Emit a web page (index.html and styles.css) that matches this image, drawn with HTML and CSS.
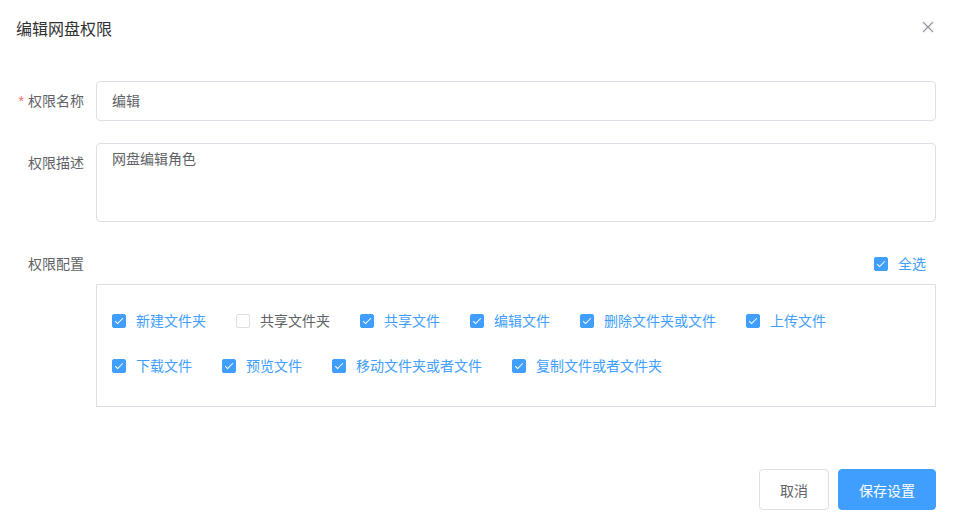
FILE: index.html
```html
<!DOCTYPE html>
<html lang="zh-CN">
<head>
    <meta charset="UTF-8">
    <meta name="viewport" content="width=device-width, initial-scale=1.0">
    <title>编辑网盘权限</title>
    <link rel="stylesheet" href="styles.css">
</head>
<body>
    <div class="dialog">
        <div class="dialog-header">
            <span class="dialog-title">编辑网盘权限</span>
            <button class="dialog-close" aria-label="关闭">
                <svg width="12" height="12" viewBox="0 0 12 12">
                    <path d="M1 1 L11 11 M11 1 L1 11" stroke="#909399" stroke-width="1.1" fill="none"/>
                </svg>
            </button>
        </div>

        <form class="form">
            <div class="form-item">
                <label class="form-label"><span class="required">*</span>权限名称</label>
                <div class="form-content">
                    <div class="input">编辑</div>
                </div>
            </div>
            <div class="form-item">
                <label class="form-label">权限描述</label>
                <div class="form-content">
                    <div class="textarea">网盘编辑角色</div>
                </div>
            </div>
            <div class="form-item">
                <label class="form-label">权限配置</label>
                <div class="form-content">
                    <div class="check-all">
                        <span class="checkbox is-checked"><span class="box"></span><span class="text">全选</span></span>
                    </div>
                    <div class="perm-box">
                        <div class="perm-row">
                            <span class="checkbox is-checked"><span class="box"></span><span class="text">新建文件夹</span></span>
                            <span class="checkbox"><span class="box"></span><span class="text">共享文件夹</span></span>
                            <span class="checkbox is-checked"><span class="box"></span><span class="text">共享文件</span></span>
                            <span class="checkbox is-checked"><span class="box"></span><span class="text">编辑文件</span></span>
                            <span class="checkbox is-checked"><span class="box"></span><span class="text">删除文件夹或文件</span></span>
                            <span class="checkbox is-checked"><span class="box"></span><span class="text">上传文件</span></span>
                        </div>
                        <div class="perm-row">
                            <span class="checkbox is-checked"><span class="box"></span><span class="text">下载文件</span></span>
                            <span class="checkbox is-checked"><span class="box"></span><span class="text">预览文件</span></span>
                            <span class="checkbox is-checked"><span class="box"></span><span class="text">移动文件夹或者文件</span></span>
                            <span class="checkbox is-checked"><span class="box"></span><span class="text">复制文件或者文件夹</span></span>
                        </div>
                    </div>
                </div>
            </div>
        </form>

        <div class="dialog-footer">
            <button class="button">取消</button>
            <button class="button button-primary">保存设置</button>
        </div>
    </div>
</body>
</html>
```

FILE: styles.css
```css
body {
    margin: 0;
    background-color: white;
    font-family: "Helvetica Neue", Helvetica, "Noto Sans CJK SC", "Liberation Sans", sans-serif;
    color: #606266;
    font-size: 14px;
}
.dialog {
    padding: 0 17px 0 16px;
}
.dialog-header {
    display: flex;
    justify-content: space-between;
    align-items: center;
    padding-top: 18px;
    height: 24px;
}
.dialog-title {
    font-size: 16px;
    line-height: 24px;
    color: #303133;
}
.dialog-close {
    border: none;
    background: transparent;
    padding: 0;
    margin-right: 2px;
    margin-top: -6px;
    width: 12px;
    height: 12px;
    display: flex;
    cursor: pointer;
}
.form {
    margin-top: 39px;
}
.form-item {
    display: flex;
    margin-bottom: 22px;
}
.form-label {
    width: 80px;
    flex-shrink: 0;
    box-sizing: border-box;
    padding-right: 12px;
    text-align: right;
    line-height: 40px;
    color: #606266;
}
.required {
    color: #f56c6c;
    margin-right: 4px;
}
.form-content {
    flex-grow: 1;
}
.input {
    height: 40px;
    box-sizing: border-box;
    border: 1px solid #dcdfe6;
    border-radius: 4px;
    padding: 0 15px;
    line-height: 38px;
    color: #606266;
}
.textarea {
    height: 79px;
    box-sizing: border-box;
    border: 1px solid #dcdfe6;
    border-radius: 4px;
    padding: 5px 15px;
    line-height: 21px;
    color: #606266;
}
.check-all {
    height: 40px;
    display: flex;
    justify-content: flex-end;
    align-items: center;
    padding-right: 10px;
}
.perm-box {
    border: 1px solid #dcdfe6;
    padding: 26px 15px 30px;
    display: flex;
    flex-direction: column;
    gap: 25px;
}
.perm-row {
    display: flex;
    gap: 30px;
}
.checkbox {
    display: inline-flex;
    align-items: center;
    height: 20px;
    cursor: pointer;
}
.checkbox .box {
    width: 14px;
    height: 14px;
    box-sizing: border-box;
    border: 1px solid #dcdfe6;
    border-radius: 2px;
    background-color: white;
    position: relative;
}
.checkbox .text {
    padding-left: 10px;
    line-height: 20px;
    color: #606266;
}
.checkbox.is-checked .box {
    background-color: #409eff;
    border-color: #409eff;
}
.checkbox.is-checked .box::after {
    content: "";
    position: absolute;
    left: 4px;
    top: 1px;
    width: 3px;
    height: 7px;
    border: 1px solid white;
    border-left: 0;
    border-top: 0;
    transform: rotate(45deg);
}
.checkbox.is-checked .text {
    color: #409eff;
}
.dialog-footer {
    display: flex;
    justify-content: flex-end;
    gap: 9px;
    margin-top: 62px;
}
.button {
    height: 41px;
    padding: 0 20px;
    border: 1px solid #dcdfe6;
    border-radius: 4px;
    background-color: white;
    color: #606266;
    font-family: inherit;
    font-size: 14px;
    cursor: pointer;
}
.button-primary {
    background-color: #409eff;
    border-color: #409eff;
    color: white;
}
```
